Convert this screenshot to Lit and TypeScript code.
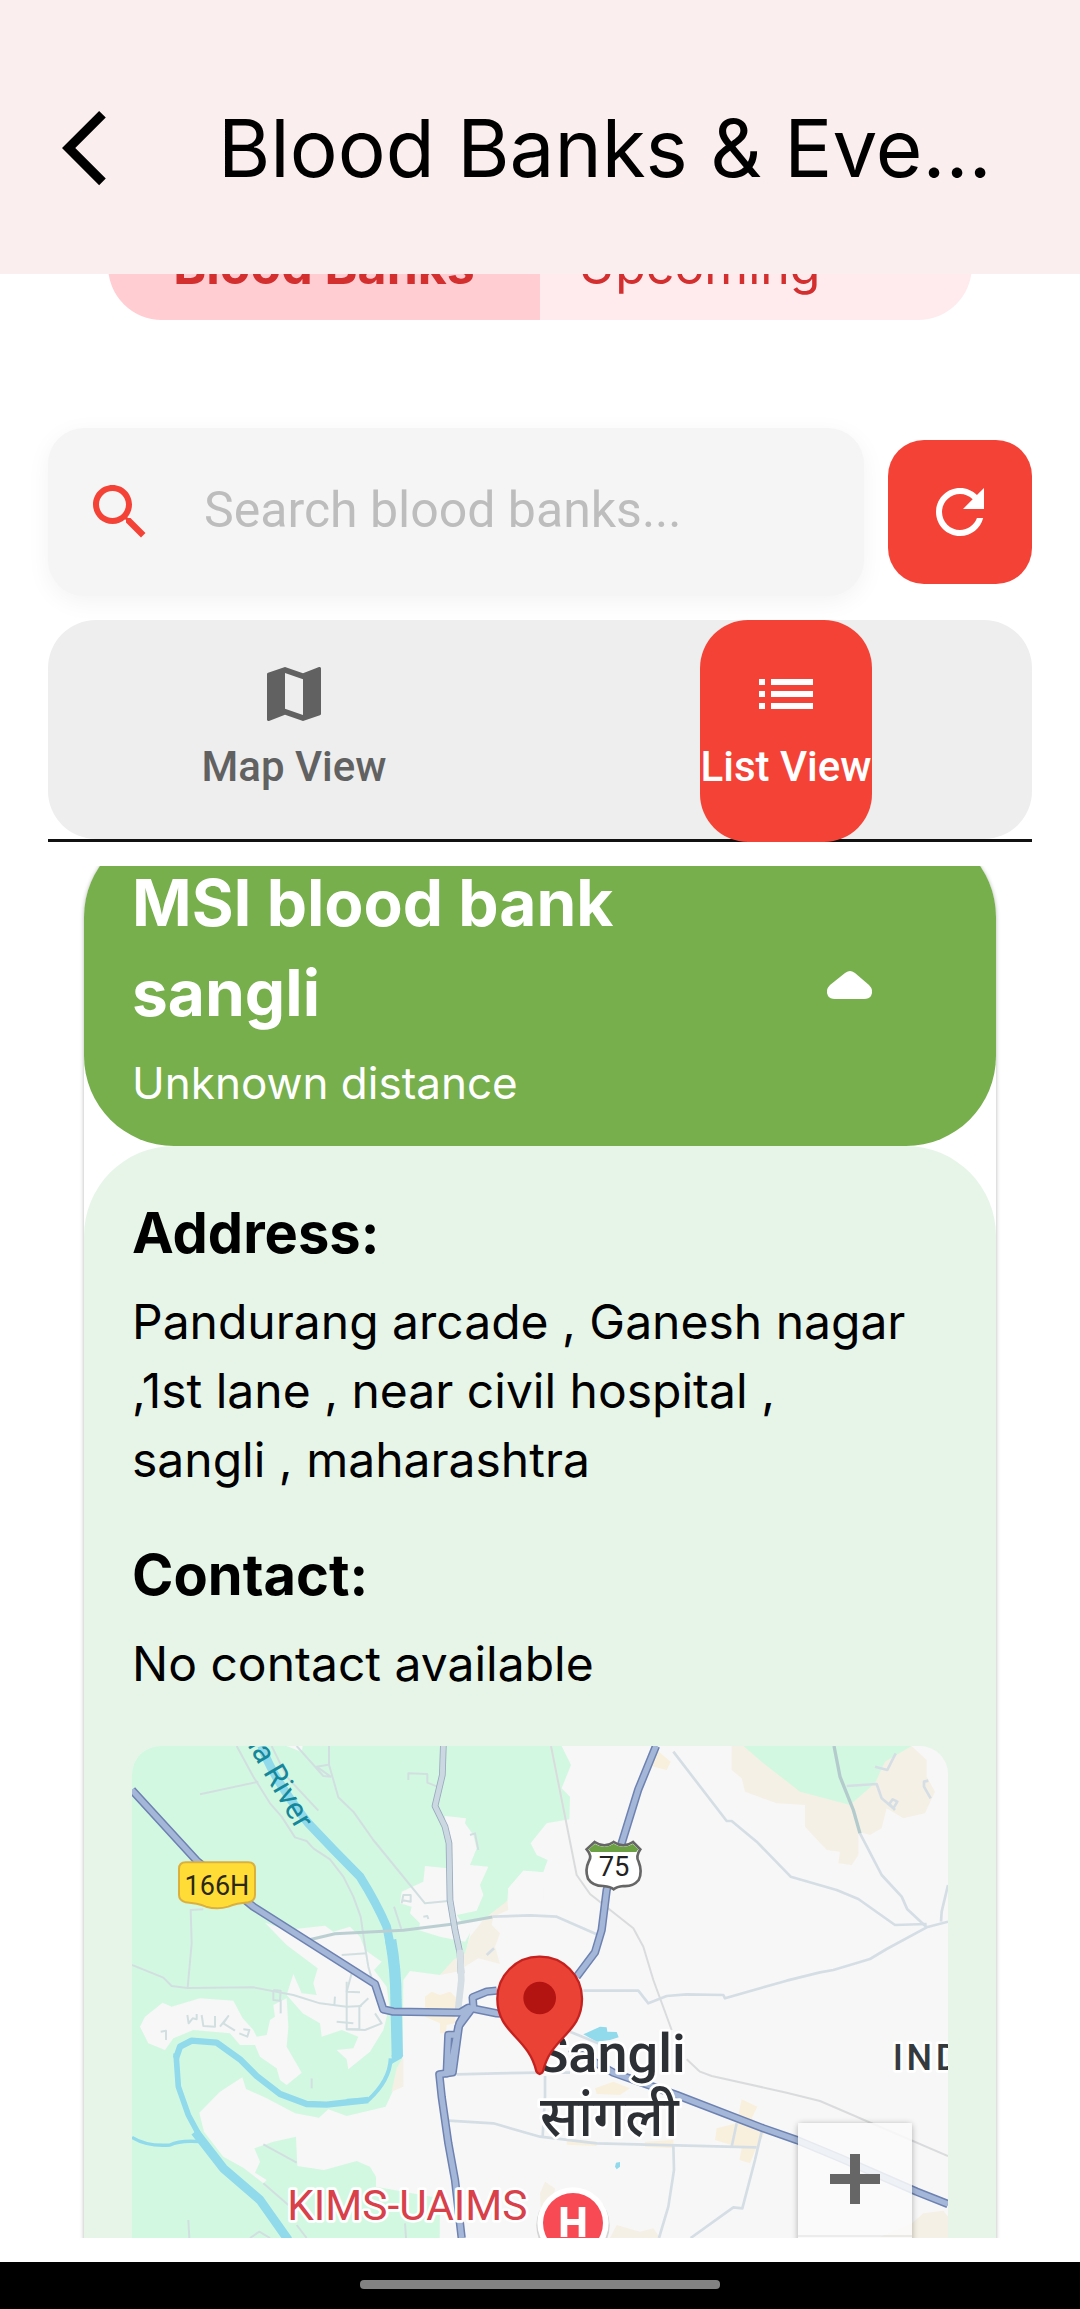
import { LitElement, html, svg, css } from "lit";
import { customElement, property, state } from "lit/decorators.js";

type Point = string;

/* Roads of the district map, as polyline point lists in map units. */
const lanes: Point[] = [
  "350,18 400,110 450,190 485,230 525,292 560,303 580,325 630,358 670,410 700,470 722,530 735,620 745,680 765,750",
  "455,18 500,110 595,212",
  "240,163 415,125",
  "530,18 610,108 632,110 590,80 625,74",
  "627,18 627,74 655,172 700,215 760,300 915,490 985,483",
  "865,120 865,100 922,102 922,128 965,145",
  "822,500 845,570",
  "250,508 212,510 215,610 203,742",
  "36,675 130,713 155,738 203,744 400,742 520,765 600,790 680,800 725,798",
  "665,645 740,640",
  "680,725 680,868 718,868 718,800 745,775",
  "695,700 680,755 720,757",
  "650,845 700,850",
  "765,820 785,850 735,870 680,868",
  "460,750 482,752 480,782 460,780 460,750",
  "482,780 482,820",
  "645,770 643,795",
  "202,825 206,850 218,835 230,838 230,822",
  "245,825 250,858 285,860 285,828",
  "300,860 325,828 310,850 345,872",
  "358,880 382,890 388,870 370,868",
  "122,875 138,872 138,900",
  "845,490 850,465 872,465 872,485 845,480",
  "575,1015 575,1045",
  "430,1213 530,1268",
  "430,1330 505,1395",
  "205,1440 208,1494",
  "390,1494 418,1475 450,1494",
  "530,1455 560,1494",
  "855,1450 858,1494",
  "1050,285 1065,280 1075,330",
  "910,530 922,528 925,537",
];

const railway: Point[] = [
  "1293,18 1370,405 1410,462 1540,565 1570,620 1600,720 1655,870",
  "1700,958 1740,995 1775,1008 2000,1058 2100,1083 2484,1248",
];

const streets: Point[] = [
  "1117,530 1230,526 1310,530 1435,585",
  "1390,752 1555,752 1585,790 1640,768 1700,763 1810,765 1815,775 2000,722 2100,697 2140,690 2250,657 2300,627 2420,562 2484,545",
  "1660,35 1820,243 1835,243 1910,305 2012,410 2150,450 2215,477 2325,555 2420,552",
  "2220,280 2285,405 2345,470 2362,508 2420,562",
  "2463,545 2465,515 2484,435",
  "1010,1003 1130,1000 1260,998 1350,998",
  "985,1142 1120,1150 1260,1190 1430,1210 1910,1222",
  "1275,1008 1275,1070 1268,1190",
  "1835,1220 1850,1150",
  "1925,1175 1905,1260 1867,1405 1840,1402 1712,1494",
  "1660,1215 1662,1290 1645,1400 1617,1494",
  "2180,138 2270,132 2285,175 2320,205 2332,185 2318,178 2308,192 2325,210",
  "2265,80 2302,90 2327,40",
  "2425,122 2412,125 2412,140 2432,175",
  "1100,645 1122,625",
  "1350,875 1440,912",
];

const highways: Point[] = [
  "36,150 230,362 400,500 765,732 790,808 820,815 1020,818 1045,803 1130,820 1300,830",
  "1130,752 1100,755 1058,772 1060,800 1030,840 1015,860 990,990 980,1000 985,885 1010,885",
  "1045,803 1018,850 998,997 958,1003 965,1070 985,1210 1005,1320 1025,1494",
  "1608,18 1555,148 1505,310 1460,450 1445,570 1425,637 1370,710",
  "1350,925 1480,998 1670,1065 1930,1165 2030,1200 2160,1254 2390,1355 2484,1392",
];

const polylines = (list: Point[], cls: string) =>
  list.map((points) => svg`<polyline class=${cls} points=${points} />`);

@customElement("area-map")
export class AreaMap extends LitElement {
  static styles = css`
    :host {
      display: block;
      position: relative;
      height: 600px;
      overflow: hidden;
      border-radius: 28px;
      background: #f7f7f7;
    }
    .canvas {
      display: block;
      width: 100%;
      height: 100%;
      font-family: Roboto, "Noto Sans", sans-serif;
    }
    polyline {
      fill: none;
      stroke-linejoin: round;
    }
    .lane {
      stroke: #d2dfe0;
      stroke-width: 6;
    }
    .rail {
      stroke: #dadbdd;
      stroke-width: 6;
    }
    .street {
      stroke: #d5dee5;
      stroke-width: 8;
    }
    .casing {
      stroke: #6d82b1;
      stroke-width: 25;
    }
    .highway {
      stroke: #a5b7d8;
      stroke-width: 16;
    }
    .park {
      fill: #d3f8e2;
    }
    .land {
      fill: #f7f7f7;
    }
    .sand {
      fill: #f5f0e5;
    }
    .town {
      fill: #f8f0dd;
    }
    .halo {
      paint-order: stroke;
      stroke: #fff;
      stroke-width: 16;
      stroke-linejoin: round;
    }
    .zoom {
      position: absolute;
      right: 36px;
      top: 377px;
      display: flex;
      flex-direction: column;
      gap: 2px;
      border-radius: 4px;
      background: rgb(226 226 226 / 50%);
      box-shadow: 0 1px 6px rgb(0 0 0 / 30%);
    }
    .zoom-button {
      display: grid;
      place-items: center;
      width: 114px;
      height: 112px;
      padding: 0;
      border: 0;
      background: rgb(255 255 255 / 72%);
    }
    .zoom-icon {
      width: 50px;
      height: 50px;
      fill: #666;
    }
  `;

  render() {
    return html`
      <svg class="canvas" viewBox="36 18 2448 1800" preserveAspectRatio="xMidYMin slice" role="img" aria-label="Sangli">
        <polygon class="park" points="36,18 1325,18 1353,75 1325,145 1350,170 1348,238 1280,250 1232,310 1250,345 1283,360 1270,397 1210,392 1165,445 1162,485 1115,520 1090,540 1000,555 1050,580 1035,650 1005,660 960,705 870,693 850,720 848,950 820,1050 797,1100 680,1128 625,1108 597,1133 525,1120 440,1075 378,1047 367,1012 300,1055 238,1118 252,1175 310,1250 370,1283 430,1330 440,1320 405,1298 420,1265 403,1225 460,1205 528,1190 532,1278 612,1290 710,1263 750,1280 768,1310 768,1340 960,1375 957,1820 36,1820" />
        <polygon class="land" points="975,228 1038,235 1035,250 1060,285 1070,325 1050,375 1105,380 1080,435 1090,465 1070,512 1010,525 1050,580 1035,605 960,590 895,570 900,550 870,520 875,500 840,490 845,455 910,425 915,378 982,385" />
        <polygon class="land" points="435,548 500,570 615,557 640,575 690,560 720,590 735,630 785,665 762,690 800,740 808,800 790,870 750,935 685,988 680,958 650,930 700,925 715,890 665,870 605,890 600,850 548,820 500,765 520,702 545,760 590,765 580,730 593,685 500,615" />
        <polygon class="land" points="60,860 75,830 128,788 155,800 240,775 340,782 368,835 400,870 410,890 440,885 450,840 465,830 460,795 500,775 505,860 500,920 545,998 500,1035 480,1020 470,985 420,950 405,915 360,915 330,880 220,870 160,895 135,930 85,910" />
        <polygon class="land" points="500,18 548,18 545,36" />
        <polygon class="land" points="1165,445 1210,392 1270,397 1270,480 1165,480" />
        <polygon class="sand" points="1162,482 1165,510 1120,530 1115,555 1140,580 1125,620 1140,672 1075,655 1010,695 960,705 1000,660 1035,640 1050,590 1090,540" />
        <polygon class="sand" points="850,950 850,1040 815,1055 830,985" />
        <polygon class="town" points="915,770 935,755 960,765 990,755 1010,775 1005,850 980,855 978,880 960,880 960,850 915,830" />
        <polygon class="town" points="1585,45 1610,30 1652,65 1640,90 1600,80" />
        <polygon class="sand" points="1835,18 1835,90 1865,115 1875,155 1970,190 2055,195 2055,260 2120,330 2160,335 2155,370 2195,375 2215,345 2215,275 2250,285 2285,265 2300,205 2350,235 2415,220 2445,155 2420,110 2420,60 2375,18" />
        <polygon class="park" points="1870,18 2375,18 2295,65 2265,130 2190,195 2040,155 1930,70" />
        <polygon class="town" points="1425,1045 1480,1025 1530,1045 1500,1065 1430,1062" />
        <polygon class="town" points="1865,1078 1912,1100 1895,1135 1940,1170 1910,1220 1890,1270 1858,1260 1865,1225 1785,1200 1790,1165 1850,1150" />
        <polygon class="town" points="1340,1195 1430,1205 1430,1218 1340,1214" />
        <polygon class="town" points="1575,1205 1660,1200 1660,1225 1575,1220" />
        <polygon class="sand" points="1275,1325 1305,1345 1300,1380 1262,1400 1260,1360" />
        <polygon class="sand" points="1490,1455 1560,1475 1600,1465 1620,1494 1470,1494" />
        <polygon class="sand" points="2376,1450 2410,1420 2470,1412 2484,1430 2484,1500 2260,1500" />

        ${polylines(lanes, "lane")}
        <g fill="none" stroke="#90daec" stroke-linejoin="round">
          <path stroke-width="26" d="M425 18 Q455 110 565 250 Q640 330 720 410 Q770 490 800 560 L820 660" />
          <path stroke-width="34" d="M812 600 Q828 690 828 780 L832 950" />
          <path stroke-width="12" d="M812 955 Q810 1020 745 1080 L680 1082" />
          <path stroke-width="19" d="M745 1080 L620 1094 L560 1092 L480 1062 L410 1008 L360 958 L290 908 L215 902 L180 920 L168 955" />
          <path stroke-width="17" d="M168 940 L175 1040 L205 1125 L240 1190" />
          <path stroke-width="27" d="M225 1175 L310 1285 L420 1380 L505 1500" />
          <path stroke-width="10" d="M36 1192 Q80 1220 150 1215 Q180 1200 240 1205" />
        </g>
        <polygon fill="#90daec" points="815,945 850,945 845,955 815,972" />
        <polygon fill="#90daec" points="1390,883 1440,860 1460,862 1462,875 1490,876 1496,892 1470,900 1430,905" />
        <polygon fill="#90daec" points="1488,1268 1500,1266 1500,1280 1490,1288 1485,1280" />
        ${polylines(railway, "rail")} ${polylines(streets, "street")}
        <polyline stroke="#bbcfd2" stroke-width="9" points="565,600 645,581 850,571 1000,552 1117,531" />
        <polyline stroke="#b3cbcc" stroke-width="10" points="2142,18 2160,110 2200,210 2220,280" />
        <polyline stroke="#98a9bd" stroke-width="20" points="970,18 967,105 945,198 975,260 987,310 990,480 1005,570 1020,640 1023,700" />
        <polyline stroke="#ccd8e1" stroke-width="15" points="970,18 967,105 945,198 975,260 987,310 990,480 1005,570 1020,640 1023,700" />
        <polyline stroke="#d5dee4" stroke-width="20" points="1020,630 1024,720 1014,812" />
        ${polylines(highways, "casing")} ${polylines(highways, "highway")}

        <path fill="#ffdc36" stroke="#dcb03c" stroke-width="6" d="M197 367 H385 Q405 367 405 387 V465 Q405 483 385 487 Q350 490 325 500 Q292 510 258 500 Q232 490 197 487 Q177 481 177 465 V387 Q177 367 197 367 Z" />
        <text x="291" y="464" font-size="81" text-anchor="middle" fill="#2b2817">166H</text>

        <path fill="#fff" stroke="#666" stroke-width="8" d="M1424 306 Q1454 326 1481 306 Q1510 326 1539 306 L1561 328 Q1546 350 1556 365 Q1568 395 1556 420 Q1540 440 1510 438 Q1490 440 1481 448 Q1472 440 1450 438 Q1418 438 1404 416 Q1394 390 1406 365 Q1418 348 1400 328 Z" />
        <path fill="#6ba043" d="M1425 312 Q1454 330 1481 311 Q1510 330 1538 312 L1555 328 L1549 336 H1413 L1406 328 Z" />
        <text x="1482" y="408" font-size="82" text-anchor="middle" fill="#222">75</text>

        <text transform="translate(530 272) rotate(60)" font-size="92" text-anchor="end" fill="#15879b">Krishna River</text>

        <text class="halo" x="1472" y="997" font-size="162" font-weight="500" text-anchor="middle" fill="#2d3035">Sangli</text>
        <text class="halo" x="1468" y="1188" font-size="166" font-weight="500" text-anchor="middle" fill="#2d3035">सांगली</text>
        <text class="halo" x="2318" y="990" font-size="108" font-weight="500" fill="#34393e">I&#x200A;N&#x200A;D</text>
        <text class="halo" x="862" y="1439" font-size="127" text-anchor="middle" fill="#d8404a">KIMS-UAIMS</text>

        <circle cx="1359" cy="1456" r="110" fill="#000" opacity="0.14" />
        <circle cx="1359" cy="1449" r="107" fill="#fff" />
        <circle cx="1359" cy="1449" r="90" fill="#f84a55" />
        <path fill="#fff" d="M1322 1401 h20 v36 h34 v-36 h20 v90 h-20 v-36 h-34 v36 h-20 z" />

        <path fill="#ea4335" stroke="#c5221f" stroke-width="7" d="M1259 650 A126 126 0 0 0 1132 777 C1132 880 1225 890 1249 994 Q1259 1010 1269 994 C1293 890 1386 880 1386 777 A126 126 0 0 0 1259 650 Z" />
        <circle cx="1259" cy="774" r="49" fill="#b31412" />
      </svg>
      <div class="zoom">
        <button class="zoom-button" aria-label="Zoom in">
          <svg class="zoom-icon" viewBox="0 0 50 50"><path d="M20 0h10v20h20v10H30v20H20V30H0V20h20z" /></svg>
        </button>
        <button class="zoom-button" aria-label="Zoom out">
          <svg class="zoom-icon" viewBox="0 0 50 50"><path d="M0 20h50v10H0z" /></svg>
        </button>
      </div>
    `;
  }
}

@customElement("blood-bank-card")
export class BloodBankCard extends LitElement {
  @property() name = "";
  @property() distance = "";
  @property() address = "";
  @property() contact = "";

  static styles = css`
    :host {
      display: block;
      background: #fff;
      border-radius: 90px;
      box-shadow: 0 1px 4px rgb(0 0 0 / 30%);
    }
    .summary {
      display: flex;
      align-items: center;
      width: 100%;
      padding: 31px 110px 31px 48px;
      border: 0;
      border-radius: 90px;
      background: #76af4b;
      color: #fff;
      font: inherit;
      text-align: left;
    }
    .titles {
      flex: 1;
      display: flex;
      flex-direction: column;
      gap: 14px;
      padding-right: 72px;
    }
    .name {
      font-size: 64px;
      font-weight: 700;
      line-height: 90px;
    }
    .distance {
      font-size: 44px;
      line-height: 63px;
    }
    .arrow {
      width: 72px;
      height: 72px;
      fill: #fff;
    }
    .details {
      padding: 54px 48px 48px;
      border-radius: 90px 90px 0 0;
      background: #e7f5e8;
      color: #000;
    }
    .label {
      margin: 0;
      font-size: 56px;
      font-weight: 700;
      line-height: 66px;
    }
    .value {
      margin: 21px 0 48px;
      font-size: 48px;
      line-height: 69px;
      white-space: pre-line;
    }
  `;

  render() {
    return html`
      <button class="summary" aria-expanded="true">
        <span class="titles">
          <span class="name">${this.name}</span>
          <span class="distance">${this.distance}</span>
        </span>
        <svg class="arrow" viewBox="0 0 72 72" aria-hidden="true">
          <path d="M36 20 Q38 20 41 22 L55 34 Q60 39 57 45 Q55 48 50 48 H21 Q16 48 14 45 Q11 39 16 34 L31 22 Q34 20 36 20 Z" />
        </svg>
      </button>
      <div class="details">
        <h2 class="label">Address:</h2>
        <p class="value">${this.address}</p>
        <h2 class="label">Contact:</h2>
        <p class="value">${this.contact}</p>
        <area-map></area-map>
      </div>
    `;
  }
}

@customElement("app-root")
export class AppRoot extends LitElement {
  @state() private view: "map" | "list" = "list";

  static styles = css`
    :host {
      display: flex;
      flex-direction: column;
      height: 100vh;
      overflow: hidden;
      background: #fff;
      color: #000;
      font-family: Inter, "Noto Sans", sans-serif;
    }
    button {
      font: inherit;
      cursor: pointer;
    }
    .header {
      flex: none;
      display: flex;
      align-items: center;
      gap: 66px;
      padding: 72px 72px 50px 62px;
      background: #fbeeee;
    }
    .back {
      flex: none;
      display: flex;
      padding: 0;
      border: 0;
      background: none;
    }
    .back-icon {
      width: 90px;
      height: 90px;
    }
    .title {
      flex: 1;
      min-width: 0;
      margin: 0;
      overflow: hidden;
      font-size: 80px;
      font-weight: 400;
      line-height: 152px;
      text-overflow: ellipsis;
      white-space: nowrap;
    }
    .tabs {
      flex: none;
      display: flex;
      align-items: flex-end;
      height: 46px;
      margin: 0 108px;
      overflow: hidden;
    }
    .tab {
      flex: 1;
      height: 108px;
      padding: 0 38px;
      border: 0;
      background: #ffebee;
      color: #d32f2f;
      font-size: 50px;
      line-height: 108px;
      text-align: left;
      border-radius: 0 54px 54px 0;
    }
    .tab-active {
      background: #ffcdd2;
      font-weight: 700;
      text-align: center;
      border-radius: 54px 0 0 54px;
    }
    .search-row {
      flex: none;
      display: flex;
      align-items: center;
      gap: 24px;
      margin: 108px 48px 24px;
    }
    .field {
      flex: 1;
      min-width: 0;
      display: flex;
      align-items: center;
      gap: 48px;
      height: 168px;
      padding: 0 36px;
      box-sizing: border-box;
      border-radius: 36px;
      background: #f5f5f5;
      box-shadow: 0 6px 24px rgb(0 0 0 / 5%);
    }
    .icon {
      flex: none;
      width: 72px;
      height: 72px;
      fill: currentColor;
    }
    .search-icon {
      color: #f44336;
    }
    .input {
      flex: 1;
      min-width: 0;
      padding: 0 0 4px;
      border: 0;
      outline: 0;
      background: none;
      color: #212121;
      font: 400 50px/60px Roboto, sans-serif;
    }
    .input::placeholder {
      color: #bdbdbd;
      opacity: 1;
    }
    .refresh {
      flex: none;
      display: grid;
      place-items: center;
      width: 144px;
      height: 144px;
      padding: 0;
      border: 0;
      border-radius: 36px;
      background: #f44336;
      color: #fff;
    }
    .views {
      flex: none;
      display: grid;
      grid-template-columns: 1fr 1fr;
      justify-items: center;
      margin: 0 48px 24px;
      background:
        linear-gradient(#111, #111) bottom / 100% 3px no-repeat;
      isolation: isolate;
      position: relative;
    }
    .views::before {
      content: "";
      position: absolute;
      inset: 0 0 3px;
      z-index: -1;
      border-radius: 48px;
      background: #eee;
    }
    .view {
      display: flex;
      flex-direction: column;
      align-items: center;
      gap: 12px;
      padding: 38px 0 50px;
      border: 0;
      border-radius: 48px;
      background: none;
      color: #616161;
      font: 500 42px/50px Roboto, sans-serif;
    }
    .view-active {
      padding-inline: 1px;
      background: #f44336;
      color: #fff;
    }
    .list {
      flex: 1;
      min-height: 0;
      margin: 0 60px 24px;
      padding: 0 24px;
      overflow: hidden;
    }
    .card {
      margin-top: -39px;
    }
    .nav {
      flex: none;
      display: flex;
      justify-content: center;
      padding: 18px 0 20px;
      background: #000;
    }
    .handle {
      flex: 0 1 360px;
      height: 9px;
      border-radius: 4px;
      background: #828282;
    }
  `;

  private viewButton(id: "map" | "list", label: string, path: string) {
    const active = this.view === id;
    return html`
      <button
        class="view ${active ? "view-active" : ""}"
        role="tab"
        aria-selected=${active}
        @click=${() => (this.view = id)}
      >
        <svg class="icon" viewBox="0 0 24 24" aria-hidden="true"><path d=${path} /></svg>
        <span>${label}</span>
      </button>
    `;
  }

  render() {
    return html`
      <header class="header">
        <button class="back" aria-label="Back">
          <svg class="back-icon" viewBox="0 0 24 24"><path d="M11.67 3.87L9.9 2.1 0 12l9.9 9.9 1.77-1.77L3.54 12z" /></svg>
        </button>
        <h1 class="title">Blood Banks &amp; Eve…</h1>
      </header>
      <nav class="tabs" role="tablist">
        <button class="tab tab-active" role="tab" aria-selected="true">Blood Banks</button>
        <button class="tab" role="tab" aria-selected="false">Upcoming</button>
      </nav>
      <div class="search-row">
        <label class="field">
          <svg class="icon search-icon" viewBox="0 0 24 24" aria-hidden="true">
            <path d="M15.5 14h-.79l-.28-.27C15.41 12.59 16 11.11 16 9.5 16 5.91 13.09 3 9.5 3S3 5.91 3 9.5 5.91 16 9.5 16c1.61 0 3.09-.59 4.23-1.57l.27.28v.79l5 4.99L20.49 19l-4.99-5zm-6 0C7.01 14 5 11.99 5 9.5S7.01 5 9.5 5 14 7.01 14 9.5 11.99 14 9.5 14z" />
          </svg>
          <input class="input" type="search" placeholder="Search blood banks..." aria-label="Search blood banks" />
        </label>
        <button class="refresh" aria-label="Refresh">
          <svg class="icon" viewBox="0 0 24 24">
            <path d="M17.65 6.35C16.2 4.9 14.21 4 12 4c-4.42 0-7.99 3.58-7.99 8s3.57 8 7.99 8c3.73 0 6.84-2.55 7.73-6h-2.08c-.82 2.33-3.04 4-5.65 4-3.31 0-6-2.69-6-6s2.69-6 6-6c1.66 0 3.14.69 4.22 1.78L13 11h7V4l-2.35 2.35z" />
          </svg>
        </button>
      </div>
      <div class="views" role="tablist">
        ${this.viewButton(
          "map",
          "Map View",
          "M20.5 3l-.16.03L15 5.1 9 3 3.36 4.9c-.21.07-.36.25-.36.48V20.5c0 .28.22.5.5.5l.16-.03L9 18.9l6 2.1 5.64-1.9c.21-.07.36-.25.36-.48V3.5c0-.28-.22-.5-.5-.5zM15 19l-6-2.11V5l6 2.11V19z"
        )}
        ${this.viewButton("list", "List View", "M3 13h2v-2H3v2zm0 4h2v-2H3v2zm0-8h2V7H3v2zm4 4h14v-2H7v2zm0 4h14v-2H7v2zM7 7v2h14V7H7z")}
      </div>
      <main class="list">
        <blood-bank-card
          class="card"
          name="MSI blood bank sangli"
          distance="Unknown distance"
          address=${"Pandurang arcade , Ganesh nagar\n,1st lane , near civil hospital ,\nsangli , maharashtra"}
          contact="No contact available"
        ></blood-bank-card>
      </main>
      <footer class="nav"><div class="handle"></div></footer>
    `;
  }
}
